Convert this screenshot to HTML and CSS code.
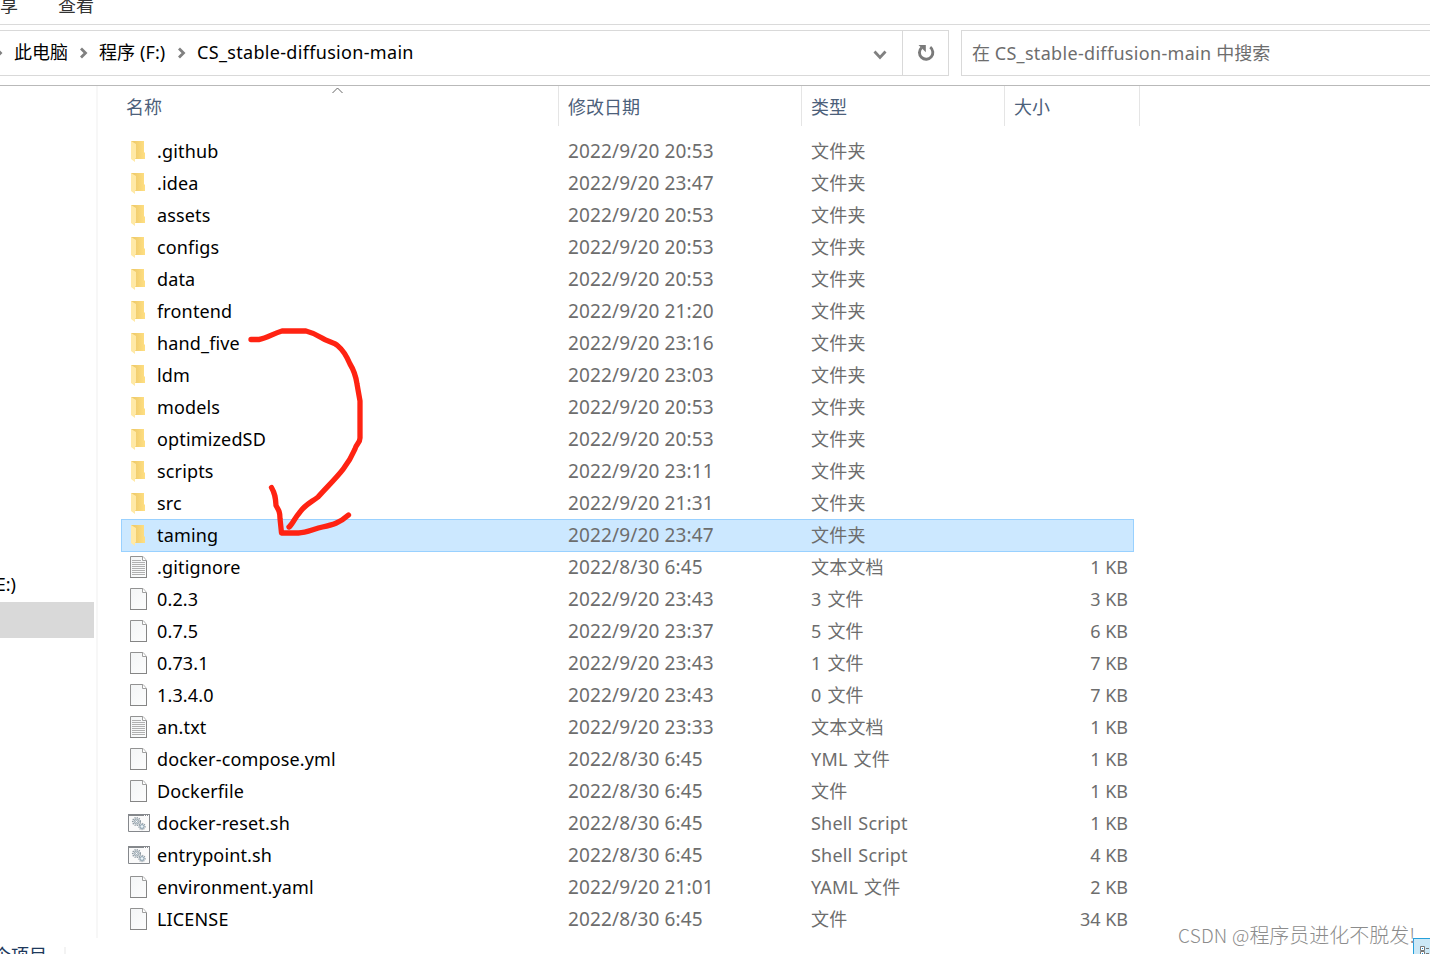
FILE: index.html
```
<!DOCTYPE html>
<html lang="zh-CN">

<head>
    <meta charset="UTF-8">
    <title>CS_stable-diffusion-main</title>
    <link rel="stylesheet" href="styles.css">
</head>

<body>
    <svg class="defs" width="0" height="0">
        <linearGradient id="back" x1="0" x2="1">
            <stop offset="0.2" stop-color="#efcb6b" />
            <stop offset="1" stop-color="#ffdf83" />
        </linearGradient>
        <linearGradient id="paper" x1="0" y1="0" x2="1" y2="1">
            <stop offset="0" stop-color="#f3f5f6" />
            <stop offset="1" stop-color="#fdfdfd" />
        </linearGradient>
        <symbol id="folder" viewBox="0 0 22 24">
            <path d="M3 2h13v11l1 1v6H5z" fill="url(#back)" />
            <path d="M3 2l5 3v14l-1 1v3l-4-3z" fill="#ffe9a6" />
        </symbol>
        <symbol id="file" viewBox="0 0 22 24">
            <path d="M2.5 1.5h12.5l3.5 4v17h-16z" fill="url(#paper)" stroke="#929292" />
            <path d="M14.5 1.5v4h4" fill="#fff" stroke="#a0a0a0" />
            <path d="M2 22.5h17M18.5 6v17" stroke="#858585" />
        </symbol>
        <symbol id="text" viewBox="0 0 22 24">
            <use href="#file" width="22" height="24" />
            <path d="M4 5.5h9M4 7.5h13M4 9.5h13M4 11.5h13M4 13.5h13M4 15.5h13M4 17.5h13M4 19.5h13" stroke="#b0b0b0" />
        </symbol>
        <symbol id="shell" viewBox="0 0 22 24">
            <path d="M.5 3.5h21v17H.5z" fill="#fafafa" stroke="#85888c" />
            <path d="M0 4h22" stroke="#85888c" stroke-width="2" />
            <path d="M16 4.500h1M18 4.500h1M20 4.500h1" stroke="#fff" />
            <circle cx="8.500" cy="10.500" r="3.800" fill="none" stroke="#8e9aa3" stroke-width="1.500" stroke-dasharray="1.200 1" />
            <circle cx="8.500" cy="10.500" r="2.500" fill="#e0e7eb" stroke="#98a5ad" />
            <circle cx="8.500" cy="10.500" r="1" fill="#fff" stroke="#8997a0" stroke-width=".7" />
            <circle cx="14" cy="15.500" r="3" fill="none" stroke="#8e9aa3" stroke-width="1.300" stroke-dasharray="1.100 .9" />
            <circle cx="14" cy="15.500" r="2" fill="#d5e4ed" stroke="#91a5b2" />
            <circle cx="14" cy="15.500" r=".7" fill="#fff" />
        </symbol>
    </svg>

    <div class="window">
        <div class="tabs"><span>享</span><span>查看</span></div>

        <div class="toolbar">
            <div class="address">
                <svg class="sep first" viewBox="0 0 10 12"><path d="M2 1.500l4.500 4.500L2 10.500" /></svg>
                <span class="crumb pc">此电脑</span>
                <svg class="sep" viewBox="0 0 10 12"><path d="M2 1.500l4.500 4.500L2 10.500" /></svg>
                <span class="crumb drive">程序 (F:)</span>
                <svg class="sep" viewBox="0 0 10 12"><path d="M2 1.500l4.500 4.500L2 10.500" /></svg>
                <span class="crumb current">CS_stable-diffusion-main</span>
                <svg class="drop" viewBox="0 0 14 10"><path d="M1.500 1.500L7 7.500l5.500-6" /></svg>
                <div class="refresh">
                    <svg width="18" height="20" viewBox="0 0 18 20">
                        <path d="M13.200 4.200A6.700 6.700 0 1 1 4.500 4.700" fill="none" stroke="#7a7a7a" stroke-width="2.900" />
                        <path d="M1.500 2h7.300v7.200z" fill="#7a7a7a" />
                    </svg>
                </div>
            </div>
            <div class="search">在 <span>CS_stable-diffusion-main</span> 中搜索</div>
        </div>

        <div class="content">
            <div class="sidebar">
                <div class="disk">E:)</div>
                <div class="disk active"></div>
            </div>
            <div class="list">
                <div class="head">
                    <div class="name">名称<svg class="sort" viewBox="0 0 12 7"><path d="M1 6l5-5 5 5" /></svg></div>
                    <div class="date">修改日期</div>
                    <div class="type">类型</div>
                    <div class="size">大小</div>
                </div>
                <div class="rows"></div>
            </div>
        </div>

        <div class="status">
            <span class="count">个项目</span>
            <div class="view">
                <svg width="16" height="15" viewBox="0 0 16 15">
                    <path d="M.5.5h4v4h-4zM.5 5.500h4v4h-4z" fill="#fff" stroke="#777" />
                    <path d="M2 2.500h1M2 7.500h1" stroke="#168ad8" />
                    <path d="M6 2.500h3M10 2.500h4M6 7.500h3M10 7.500h4" stroke="#777" />
                </svg>
            </div>
        </div>
    </div>

    <!-- hand drawn arrow -->
    <svg class="arrow" width="120" height="216" viewBox="245 324 120 216">
        <path d="M251 339.500h8c8-1 14-6 23-8.500h24c8 2 11 4 16 7 6 4 12 4 16 8 5 4 9 11 12 18 5 8 6 13 7 20l3 17v37c0 5-4 6-5 11-9 21-22 31-37 48-8 6-13 8-18 15-6 7-8 13-11 15" />
        <path d="M271.500 487.500c4 7 4 11 4.500 18 3 5 4 7 4 13l1.500 14.500h17c8 0 15-4 24-6 10-2 17-4 26-12" />
    </svg>
    <div class="watermark"><span>CSDN @</span>程序员进化不脱发!</div>

    <script src="script.js"></script>
</body>

</html>
```
FILE: styles.css
```
html,
body {
    width: 100%;
    height: 100%;
    margin: 0;
    padding: 0;
    overflow: hidden;
    background-color: #fff;
    color: #000;
    font-size: 18px;
    font-family: "Noto Sans", "Noto Sans CJK SC", sans-serif;
}

div {
    box-sizing: border-box;
}

.defs {
    position: absolute;
}

.window {
    height: 954px;
    display: flex;
    flex-direction: column;
}

.tabs {
    height: 25px;
    flex: none;
    display: flex;
    gap: 40px;
    border-bottom: 1px solid #dadada;
    color: #333;
    line-height: 11px;
}

.toolbar {
    height: 61px;
    flex: none;
    display: flex;
    gap: 12px;
    padding: 5px 0 9px;
    border-bottom: 1px solid #b9b9b9;
}

.address {
    width: 949px;
    height: 46px;
    display: flex;
    align-items: center;
    border: 1px solid #d9d9d9;
    border-left: 0;
}

.crumb {
    height: 44px;
    white-space: nowrap;
    line-height: 42px;
}

.pc {
    width: 65px;
}

.drive {
    width: 78px;
    letter-spacing: 0.1px;
}

.current {
    flex: 1;
    letter-spacing: 0.32px;
}

.sep {
    width: 10px;
    height: 12px;
    margin-right: 10px;
    flex: none;
}

.sep.first {
    margin-left: -6px;
}

.sep path,
.drop path {
    fill: none;
    stroke: #808080;
    stroke-width: 2.8;
}

.drop {
    width: 14px;
    height: 10px;
    margin: 3px 15px 0 0;
}

.refresh {
    width: 46px;
    height: 44px;
    display: flex;
    align-items: center;
    justify-content: center;
    border-left: 1px solid #d9d9d9;
}

.search {
    flex: 1;
    height: 46px;
    padding-left: 10px;
    border: 1px solid #d9d9d9;
    border-right: 0;
    line-height: 44px;
    color: #6d6d6d;
}

.search span {
    letter-spacing: 0.32px;
}

.content {
    height: 852px;
    flex: none;
    display: flex;
}

.sidebar {
    width: 98px;
    padding-top: 480px;
    border-right: 2px solid #f7f7f7;
}

.disk {
    width: 16px;
    height: 36px;
    line-height: 36px;
    display: flex;
    justify-content: flex-end;
    overflow: hidden;
}

.disk.active {
    width: 94px;
    background-color: #d9d9d9;
}

.list {
    padding-left: 23px;
}

.head,
.row {
    display: flex;
}

.head {
    height: 40px;
    line-height: 42px;
    margin-bottom: 9px;
    color: #4c607a;
}

.head div {
    border-right: 1px solid #e5e5e5;
}

.head .name {
    position: relative;
    width: 438px;
    padding-left: 5px;
}

.head .date {
    width: 243px;
    padding-left: 9px;
}

.head .type {
    width: 203px;
    padding-left: 9px;
}

.head .size {
    width: 135px;
    padding-left: 9px;
}

.sort {
    position: absolute;
    left: 210px;
    top: 1px;
    width: 13px;
    height: 7px;
}

.sort path {
    fill: none;
    stroke: #666;
}

.row {
    width: 1013px;
    height: 32px;
    line-height: 32px;
    color: #6d6d6d;
    white-space: nowrap;
}

.row.selected {
    height: 33px;
    margin-bottom: -1px;
    background-color: #cce8ff;
    box-shadow: inset 0 0 0 1px #99d1ff;
}

.row .icon {
    width: 22px;
    height: 24px;
    margin: 4px 7px 0;
}

.row .name {
    width: 411px;
    letter-spacing: 0.15px;
    color: #000;
}

.row .date {
    width: 243px;
    font-size: 19px;
    letter-spacing: 0.14px;
}

.row .type {
    width: 203px;
    letter-spacing: 0.2px;
    word-spacing: 1px;
}

.row .size {
    width: 114px;
    text-align: right;
}

.status {
    height: 16px;
    display: flex;
    justify-content: space-between;
    overflow: hidden;
}

.count {
    width: 73px;
    height: 20px;
    margin: 9px 0 0 -7px;
    border-right: 2px solid #f3f3f3;
    box-sizing: border-box;
    line-height: 16px;
    color: #1e395b;
}

.view {
    width: 17px;
    height: 16px;
    padding: 7px 0 0 6px;
    background-color: #cce8f6;
    border: 1px solid #26a0da;
    border-right: 0;
    border-bottom: 0;
    line-height: 0;
}

.arrow {
    position: absolute;
    left: 245px;
    top: 324px;
}

.arrow path {
    fill: none;
    stroke: #ff2312;
    stroke-width: 5.3;
    stroke-linecap: round;
    stroke-linejoin: round;
}

.watermark {
    position: absolute;
    left: 1178px;
    top: 922px;
    line-height: 26px;
    font-size: 20px;
    font-family: "Noto Sans CJK SC", sans-serif;
    font-weight: 300;
    color: #8c8c8c;
    white-space: nowrap;
}

.watermark span {
    font-size: 19px;
    letter-spacing: 0.2px;
}
```
FILE: script.js
```
const files = [
    ['folder', '.github', '2022/9/20 20:53', '文件夹', ''],
    ['folder', '.idea', '2022/9/20 23:47', '文件夹', ''],
    ['folder', 'assets', '2022/9/20 20:53', '文件夹', ''],
    ['folder', 'configs', '2022/9/20 20:53', '文件夹', ''],
    ['folder', 'data', '2022/9/20 20:53', '文件夹', ''],
    ['folder', 'frontend', '2022/9/20 21:20', '文件夹', ''],
    ['folder', 'hand_five', '2022/9/20 23:16', '文件夹', ''],
    ['folder', 'ldm', '2022/9/20 23:03', '文件夹', ''],
    ['folder', 'models', '2022/9/20 20:53', '文件夹', ''],
    ['folder', 'optimizedSD', '2022/9/20 20:53', '文件夹', ''],
    ['folder', 'scripts', '2022/9/20 23:11', '文件夹', ''],
    ['folder', 'src', '2022/9/20 21:31', '文件夹', ''],
    ['folder', 'taming', '2022/9/20 23:47', '文件夹', ''],
    ['text', '.gitignore', '2022/8/30 6:45', '文本文档', '1 KB'],
    ['file', '0.2.3', '2022/9/20 23:43', '3 文件', '3 KB'],
    ['file', '0.7.5', '2022/9/20 23:37', '5 文件', '6 KB'],
    ['file', '0.73.1', '2022/9/20 23:43', '1 文件', '7 KB'],
    ['file', '1.3.4.0', '2022/9/20 23:43', '0 文件', '7 KB'],
    ['text', 'an.txt', '2022/9/20 23:33', '文本文档', '1 KB'],
    ['file', 'docker-compose.yml', '2022/8/30 6:45', 'YML 文件', '1 KB'],
    ['file', 'Dockerfile', '2022/8/30 6:45', '文件', '1 KB'],
    ['shell', 'docker-reset.sh', '2022/8/30 6:45', 'Shell Script', '1 KB'],
    ['shell', 'entrypoint.sh', '2022/8/30 6:45', 'Shell Script', '4 KB'],
    ['file', 'environment.yaml', '2022/9/20 21:01', 'YAML 文件', '2 KB'],
    ['file', 'LICENSE', '2022/8/30 6:45', '文件', '34 KB']
];

document.querySelector('.rows').innerHTML = files.map(([icon, name, date, type, size]) => `
    <div class="row${name === 'taming' ? ' selected' : ''}">
        <svg class="icon"><use href="#${icon}" /></svg>
        <div class="name">${name}</div>
        <div class="date">${date}</div>
        <div class="type">${type}</div>
        <div class="size">${size}</div>
    </div>`).join('');
```
